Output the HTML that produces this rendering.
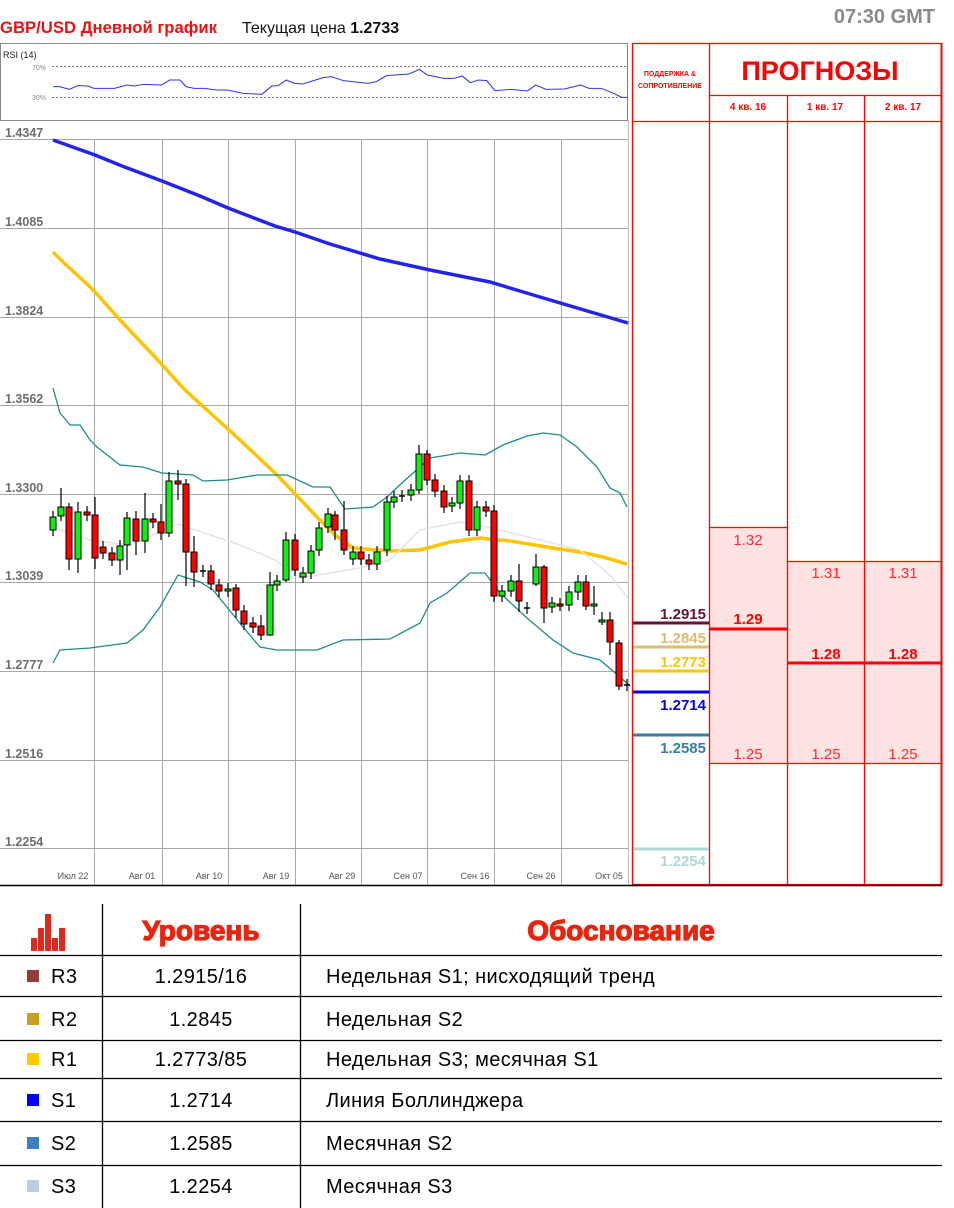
<!DOCTYPE html>
<html><head><meta charset="utf-8"><style>
body{margin:0;width:954px;height:1208px;background:#fff;position:relative;overflow:hidden;font-family:"Liberation Sans","DejaVu Sans",sans-serif}
.a{position:absolute;white-space:nowrap}
</style></head><body>
<svg class="a" style="left:0;top:0" width="954" height="1208" viewBox="0 0 954 1208" font-family="Liberation Sans, DejaVu Sans, sans-serif">
<text x="0" y="33" font-size="17" font-weight="bold" fill="#ee1111" textLength="217" lengthAdjust="spacingAndGlyphs">GBP/USD Дневной график</text>
<text x="242" y="33" font-size="16" fill="#111">Текущая цена <tspan font-weight="bold">1.2733</tspan></text>
<text x="935" y="23" font-size="20" font-weight="bold" fill="#8a8a8a" text-anchor="end">07:30 GMT</text>
<!-- RSI box -->
<rect x="0.5" y="43.5" width="627" height="77" fill="#fff" stroke="#888"/>
<text x="3" y="58" font-size="9" fill="#222">RSI (14)</text>
<text x="46" y="70" font-size="7" fill="#888" text-anchor="end">70%</text>
<text x="46" y="100" font-size="7" fill="#888" text-anchor="end">30%</text>
<line x1="52" y1="66.5" x2="627" y2="66.5" stroke="#777" stroke-dasharray="2,2"/>
<line x1="52" y1="97.5" x2="627" y2="97.5" stroke="#777" stroke-dasharray="2,2"/>
<g transform="scale(0.409,0.3333)"><polyline fill="none" stroke="#3535ee" stroke-width="3" points="130,260 145,260 170,268 190,257 215,258 230,265 280,265 310,255 330,258 350,253 395,255 415,240 440,240 455,260 475,265 500,265 530,270 555,270 595,280 640,283 665,258 680,257 700,240 720,250 740,252 790,233 810,230 840,242 900,250 920,245 945,227 1000,222 1025,208 1045,225 1085,235 1110,235 1130,228 1150,248 1170,240 1190,242 1210,272 1250,268 1290,273 1310,255 1335,268 1380,267 1410,258 1420,255 1440,265 1470,265 1500,280 1520,292 1535,292"/></g>
<!-- main chart -->
<line x1="0" y1="120.5" x2="628" y2="120.5" stroke="#888"/>
<line x1="628.5" y1="120" x2="628.5" y2="885" stroke="#bbb"/>
<g stroke="#a8a8a8" stroke-width="1">
<line x1="0" y1="139.5" x2="628" y2="139.5"/><line x1="0" y1="228.5" x2="628" y2="228.5"/><line x1="0" y1="317.5" x2="628" y2="317.5"/><line x1="0" y1="405.5" x2="628" y2="405.5"/><line x1="0" y1="494.5" x2="628" y2="494.5"/><line x1="0" y1="582.5" x2="628" y2="582.5"/><line x1="0" y1="671.5" x2="628" y2="671.5"/><line x1="0" y1="760.5" x2="628" y2="760.5"/><line x1="0" y1="848.5" x2="628" y2="848.5"/>
<line x1="94.5" y1="139" x2="94.5" y2="885"/><line x1="162.5" y1="139" x2="162.5" y2="885"/><line x1="228.5" y1="139" x2="228.5" y2="885"/><line x1="295.5" y1="139" x2="295.5" y2="885"/><line x1="361.5" y1="139" x2="361.5" y2="885"/><line x1="427.5" y1="139" x2="427.5" y2="885"/><line x1="494.5" y1="139" x2="494.5" y2="885"/><line x1="561.5" y1="139" x2="561.5" y2="885"/>
</g>
<g font-size="12.5" font-weight="bold" fill="#6e6e6e">
<text x="5" y="137">1.4347</text><text x="5" y="226">1.4085</text><text x="5" y="315">1.3824</text><text x="5" y="403">1.3562</text><text x="5" y="492">1.3300</text><text x="5" y="580">1.3039</text><text x="5" y="669">1.2777</text><text x="5" y="758">1.2516</text><text x="5" y="846">1.2254</text>
</g>
<g font-size="9" fill="#555" text-anchor="middle">
<text x="73" y="879">Июл 22</text><text x="142" y="879">Авг 01</text><text x="209" y="879">Авг 10</text><text x="276" y="879">Авг 19</text><text x="342" y="879">Авг 29</text><text x="408" y="879">Сен 07</text><text x="475" y="879">Сен 16</text><text x="541" y="879">Сен 26</text><text x="609" y="879">Окт 05</text>
</g>
<polyline fill="none" stroke="#2323ee" stroke-width="3.5" points="53,140 95,155 122,166 162,181 200,196 228,208 275,226 295,232 330,244 380,259 430,270 490,282 540,297 628,323"/>
<polyline fill="none" stroke="#ffc400" stroke-width="3.5" points="53,252 62,261 88,285 95,292 120,320 155,357 185,390 207,410 240,440 277,475 317,517 335,535 353,548 390,551 420,550 450,542 480,538 510,541 553,548 580,552 603,557 627,564"/>
<polyline fill="none" stroke="#e4e4e4" stroke-width="1.5" points="55,528 90,540 130,545 178,524 240,545 275,560 300,578 330,573 360,568 390,560 420,530 460,522 500,530 540,540 580,550 610,575 628,598"/>
<polyline fill="none" stroke="#1c8c8c" stroke-width="1.3" points="53,388 60,413 70,425 80,425 90,440 97,447 120,465 143,467 162,473 193,475 203,481 227,480 257,475 287,475 313,487 330,487 345,509 373,507 387,497 403,482 430,458 460,453 485,455 503,445 527,436 543,433 560,435 577,447 597,467 610,488 620,493 627,507"/>
<polyline fill="none" stroke="#1c8c8c" stroke-width="1.3" points="53,663 60,650 90,648 127,643 143,630 160,607 178,575 200,582 213,590 243,627 260,647 277,650 317,650 343,640 390,639 420,623 430,603 447,593 470,573 485,573 500,593 527,618 553,640 573,653 600,660 620,677 630,686"/>
<g id="candles"></g>
<!-- right panel -->
<rect x="709" y="527" width="78" height="236" fill="#ffe3e3"/>
<rect x="787" y="561" width="155" height="202" fill="#ffe3e3"/>
<g stroke="#ff0000" stroke-width="1.3" fill="none">
<rect x="632.5" y="43.5" width="309" height="841"/>
<line x1="709.5" y1="43" x2="709.5" y2="885"/>
<line x1="787.5" y1="95" x2="787.5" y2="885"/>
<line x1="864.5" y1="95" x2="864.5" y2="885"/>
<line x1="709" y1="95.5" x2="942" y2="95.5"/>
<line x1="632" y1="121.5" x2="942" y2="121.5"/>
<line x1="709" y1="527.5" x2="787" y2="527.5"/>
<line x1="787" y1="561.5" x2="942" y2="561.5"/>
<line x1="709" y1="763.5" x2="942" y2="763.5"/>
</g>
<line x1="941.5" y1="43" x2="941.5" y2="885" stroke="#ff0000" stroke-width="2"/>
<line x1="709" y1="629" x2="787" y2="629" stroke="#ff0000" stroke-width="3"/>
<line x1="787" y1="663" x2="942" y2="663" stroke="#ff0000" stroke-width="3"/>
<g fill="#ff0000" font-weight="bold" text-anchor="middle">
<text x="670" y="76" font-size="7">ПОДДЕРЖКА &amp;</text>
<text x="670" y="88" font-size="7">СОПРОТИВЛЕНИЕ</text>
<text x="820" y="80" font-size="27">ПРОГНОЗЫ</text>
<text x="748" y="110" font-size="10">4 кв. 16</text>
<text x="825" y="110" font-size="10">1 кв. 17</text>
<text x="903" y="110" font-size="10">2 кв. 17</text>
<text x="748" y="624" font-size="15">1.29</text>
<text x="826" y="659" font-size="15">1.28</text>
<text x="903" y="659" font-size="15">1.28</text>
</g>
<g fill="#ff2a2a" font-size="15" text-anchor="middle">
<text x="748" y="545">1.32</text><text x="826" y="578">1.31</text><text x="903" y="578">1.31</text>
<text x="748" y="759">1.25</text><text x="826" y="759">1.25</text><text x="903" y="759">1.25</text>
</g>
<g stroke-width="3">
<line x1="633" y1="623" x2="709" y2="623" stroke="#6b0f3a"/>
<line x1="633" y1="647" x2="709" y2="647" stroke="#dcbc70"/>
<line x1="633" y1="671" x2="709" y2="671" stroke="#ffc400"/>
<line x1="633" y1="692" x2="709" y2="692" stroke="#0000ee"/>
<line x1="633" y1="735" x2="709" y2="735" stroke="#3b7ea1"/>
<line x1="633" y1="849" x2="709" y2="849" stroke="#b0d8d8"/>
</g>
<g font-size="15" font-weight="bold" text-anchor="end">
<text x="706" y="619" fill="#6b0f3a">1.2915</text>
<text x="706" y="643" fill="#dcbc70">1.2845</text>
<text x="706" y="667" fill="#ffc400">1.2773</text>
<text x="706" y="710" fill="#0000ee">1.2714</text>
<text x="706" y="753" fill="#3b7ea1">1.2585</text>
<text x="706" y="866" fill="#b0d8d8">1.2254</text>
</g>
<line x1="0" y1="885.5" x2="942" y2="885.5" stroke="#000" stroke-width="1.5"/>
<!-- table -->
<g fill="#dd2a20">
<rect x="31" y="938" width="6" height="13"/><rect x="38" y="928" width="6" height="23"/><rect x="45" y="914" width="6" height="37"/><rect x="52" y="938" width="6" height="13"/><rect x="59" y="928" width="6" height="23"/>
</g>
<g stroke="#000" stroke-width="1.3">
<line x1="102.5" y1="904" x2="102.5" y2="1208"/><line x1="300.5" y1="904" x2="300.5" y2="1208"/>
<line x1="0" y1="955.5" x2="942" y2="955.5"/><line x1="0" y1="996.5" x2="942" y2="996.5"/><line x1="0" y1="1040.5" x2="942" y2="1040.5"/><line x1="0" y1="1078.5" x2="942" y2="1078.5"/><line x1="0" y1="1121.5" x2="942" y2="1121.5"/><line x1="0" y1="1165.5" x2="942" y2="1165.5"/>
</g>
<g font-size="28" font-weight="bold" fill="#e8240e" stroke="#e8240e" stroke-width="1.2" text-anchor="middle">
<text x="201" y="940">Уровень</text><text x="621" y="940">Обоснование</text>
</g>
<rect x="27" y="970" width="12" height="12" fill="#943b3b"/>
<rect x="27" y="1013" width="12" height="12" fill="#c9a01e"/>
<rect x="27" y="1053" width="12" height="12" fill="#ffcc00"/>
<rect x="27" y="1094" width="12" height="12" fill="#0000ff"/>
<rect x="27" y="1137" width="12" height="12" fill="#3f7fbf"/>
<rect x="27" y="1180" width="12" height="12" fill="#b8cfe6"/>
<g font-size="20" fill="#000" letter-spacing="0.4">
<text x="51" y="983">R3</text><text x="51" y="1026">R2</text><text x="51" y="1066">R1</text><text x="51" y="1107">S1</text><text x="51" y="1150">S2</text><text x="51" y="1193">S3</text>
<g text-anchor="middle"><text x="201" y="983">1.2915/16</text><text x="201" y="1026">1.2845</text><text x="201" y="1066">1.2773/85</text><text x="201" y="1107">1.2714</text><text x="201" y="1150">1.2585</text><text x="201" y="1193">1.2254</text></g>
<text x="326" y="983">Недельная S1; нисходящий тренд</text><text x="326" y="1026">Недельная S2</text><text x="326" y="1066">Недельная S3; месячная S1</text><text x="326" y="1107">Линия Боллинджера</text><text x="326" y="1150">Месячная S2</text><text x="326" y="1193">Месячная S3</text>
</g>
</svg>
<script>
var d=[[53,517,530,'g'],[61,507,516,'g',488,521],[69,507,559,'r',503,570],[78,512,559,'g',502,573],[87,512,515,'r'],[95,515,558,'r',497,569],[103,547,553,'r'],[112,553,560,'r'],[120,546,560,'g',540,575],[127,518,545,'g',512,570],[136,519,541,'r',511,555],[145,519,541,'g',493,553],[153,519,522,'r'],[161,522,533,'r',504,540],[169,481,533,'g',472,537],[178,481,484,'r',470,500],[186,484,552,'r',479,586],[194,552,572,'r',536,587],[203,571,571,'d'],[211,571,584,'r'],[219,585,591,'r'],[228,589,591,'g'],[236,588,610,'r',584,618],[244,611,624,'r'],[253,623,627,'r'],[261,626,635,'r',615,640],[270,585,635,'g',572,636],[277,581,585,'g'],[286,540,580,'g',532,582],[295,540,570,'r'],[303,573,577,'g'],[311,551,573,'g'],[319,528,550,'g'],[328,514,527,'g'],[335,515,530,'r',511,540],[344,530,550,'r',501,555],[353,552,559,'g'],[361,552,559,'r'],[369,560,564,'r'],[377,552,564,'g'],[387,502,550,'g'],[394,497,502,'g'],[402,496,496,'d'],[411,490,495,'g'],[419,454,490,'g',445,494],[427,454,480,'r',450,485],[435,480,491,'r'],[444,491,507,'r'],[452,503,506,'g'],[460,481,503,'g'],[469,481,530,'r'],[477,507,530,'g'],[486,507,511,'r'],[494,511,596,'r'],[502,591,596,'g'],[511,581,591,'g'],[519,581,601,'r',564,612],[527,608,608,'d'],[536,567,584,'g',554,586],[544,567,608,'r',565,623],[552,603,607,'g'],[560,604,605,'r'],[569,592,605,'g'],[578,582,592,'g',575,600],[586,582,606,'r',575,610],[594,604,605,'g',586,615],[602,620,622,'g',612,625],[610,620,642,'r',612,655],[619,643,686,'r',640,690],[627,685,685,'d']];
var s='';
d.forEach(function(c){var x=c[0],t=c[1],b=c[2],k=c[3],wt=c[4]||t-6,wb=c[5]||b+6;
s+='<line x1="'+x+'" y1="'+wt+'" x2="'+x+'" y2="'+wb+'" stroke="#000" stroke-width="1.2"/>';
if(k=='d'){s+='<line x1="'+(x-3)+'" y1="'+t+'" x2="'+(x+3)+'" y2="'+t+'" stroke="#000" stroke-width="1.5"/>';}
else{var h=Math.max(b-t,2);s+='<rect x="'+(x-3)+'" y="'+t+'" width="6" height="'+h+'" fill="'+(k=='g'?'#11ee11':'#ff0000')+'" stroke="#000" stroke-width="1"/>';}});
document.getElementById('candles').innerHTML=s;
</script>
</body></html>
